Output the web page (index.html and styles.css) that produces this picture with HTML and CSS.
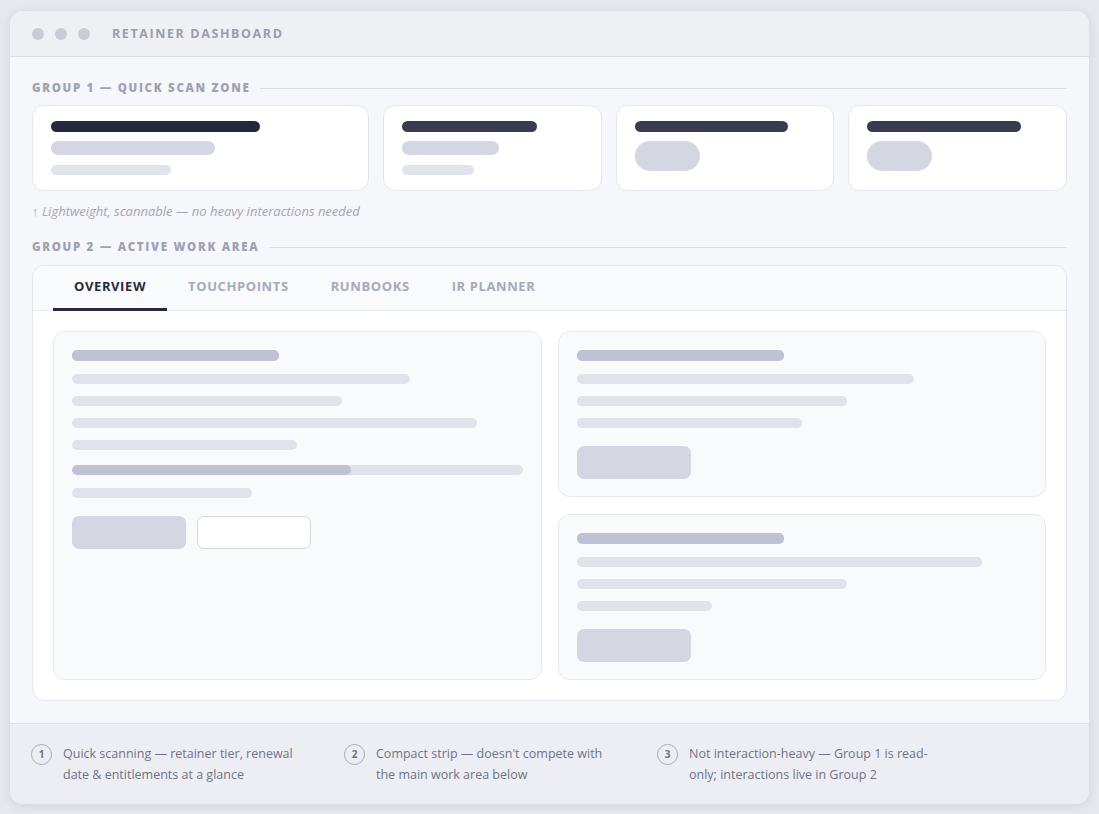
FILE: index.html
```html
<!DOCTYPE html>
<html>
    <head>
        <meta charset="utf-8">
        <link rel="stylesheet" href="styles.css">
    </head>

    <body>
        <div class="window">
            <div class="titlebar">
                <span class="dot"></span>
                <span class="dot"></span>
                <span class="dot"></span>
                <span class="title">Retainer Dashboard</span>
            </div>

            <div class="main">
                <div class="group-label">Group 1 — Quick Scan Zone</div>

                <div class="scan-strip">
                    <div class="scan-card">
                        <div class="bar bar-dark w-70"></div>
                        <div class="bar bar-mid w-55"></div>
                        <div class="bar bar-light w-40"></div>
                    </div>
                    <div class="scan-card">
                        <div class="bar bar-dark2 w-75"></div>
                        <div class="bar bar-mid w-54"></div>
                        <div class="bar bar-light w-40"></div>
                    </div>
                    <div class="scan-card">
                        <div class="bar bar-dark2 w-85"></div>
                        <div class="pill"></div>
                    </div>
                    <div class="scan-card">
                        <div class="bar bar-dark2 w-85"></div>
                        <div class="pill"></div>
                    </div>
                </div>

                <div class="hint">↑ Lightweight, scannable — no heavy interactions needed</div>

                <div class="group-label">Group 2 — Active Work Area</div>

                <div class="work-panel">
                    <div class="tabs">
                        <div class="tab active">Overview</div>
                        <div class="tab">Touchpoints</div>
                        <div class="tab">Runbooks</div>
                        <div class="tab">IR Planner</div>
                    </div>

                    <div class="tab-body">
                        <div class="block block-tall">
                            <div class="line line-head w-46"></div>
                            <div class="line w-75"></div>
                            <div class="line w-60"></div>
                            <div class="line w-90"></div>
                            <div class="line w-50"></div>
                            <div class="progress"><div class="progress-fill"></div></div>
                            <div class="line w-40"></div>
                            <div class="actions">
                                <div class="btn"></div>
                                <div class="btn btn-outline"></div>
                            </div>
                        </div>

                        <div class="side">
                            <div class="block">
                                <div class="line line-head w-46"></div>
                                <div class="line w-75"></div>
                                <div class="line w-60"></div>
                                <div class="line w-50"></div>
                                <div class="actions"><div class="btn"></div></div>
                            </div>
                            <div class="block">
                                <div class="line line-head w-46"></div>
                                <div class="line w-90"></div>
                                <div class="line w-60"></div>
                                <div class="line w-30"></div>
                                <div class="actions"><div class="btn"></div></div>
                            </div>
                        </div>
                    </div>
                </div>
            </div>

            <div class="notes">
                <div class="note">
                    <span class="num">1</span>
                    <p>Quick scanning — retainer tier, renewal date &amp; entitlements at a glance</p>
                </div>
                <div class="note">
                    <span class="num">2</span>
                    <p>Compact strip — doesn't compete with the main work area below</p>
                </div>
                <div class="note">
                    <span class="num">3</span>
                    <p>Not interaction-heavy — Group 1 is read-only; interactions live in Group 2</p>
                </div>
            </div>
        </div>
    </body>
</html>
```

FILE: styles.css
```css
* {
    box-sizing: border-box;
}

body {
    margin: 0;
    padding: 10px 9px 12px;
    background-color: #e7e8ed;
    font-family: "Open Sans", "Noto Sans", sans-serif;
}

.window {
    background-color: #f6f7fa;
    border: 1px solid #dcdee5;
    border-radius: 14px;
    overflow: hidden;
    box-shadow: 0 2px 10px rgba(40, 44, 70, 0.08);
}

/* title bar */
.titlebar {
    display: flex;
    align-items: center;
    height: 46px;
    padding: 0 22px;
    background-color: #eff0f4;
    border-bottom: 1px solid #dcdee6;
}

.dot {
    width: 12px;
    height: 12px;
    border-radius: 50%;
    background-color: #c9cbd5;
    margin-right: 11px;
}

.title {
    margin-left: 11px;
    font-size: 12.5px;
    font-weight: 700;
    letter-spacing: 1.6px;
    text-transform: uppercase;
    color: #9a9dae;
}

/* main area */
.main {
    padding: 23px 22px 22px;
}

.group-label {
    display: flex;
    align-items: center;
    gap: 10px;
    font-size: 11.5px;
    font-weight: 800;
    letter-spacing: 1.7px;
    text-transform: uppercase;
    color: #9ea2b4;
    line-height: 16px;
}

.group-label::after {
    content: "";
    flex: 1;
    height: 1px;
    background-color: #dcdee6;
}

.scan-strip {
    display: grid;
    grid-template-columns: 1.54fr 1fr 1fr 1fr;
    gap: 14px;
    margin-top: 9px;
}

.scan-card {
    height: 86px;
    padding: 15px 18px;
    background-color: #fff;
    border: 1px solid #e3e5ec;
    border-radius: 12px;
}

.bar {
    border-radius: 6px;
}

.bar-dark {
    height: 11px;
    background-color: #23283a;
}

.bar-dark2 {
    height: 11px;
    background-color: #393c50;
}

.bar-mid {
    height: 14px;
    margin-top: 9px;
    background-color: #d4d6e2;
    border-radius: 7px;
}

.bar-light {
    height: 10px;
    margin-top: 10px;
    background-color: #e2e4ec;
    border-radius: 5px;
}

.pill {
    width: 65px;
    height: 30px;
    margin-top: 9px;
    border-radius: 15px;
    background-color: #d4d6e2;
}

.hint {
    margin: 12px 0 20px;
    font-size: 13px;
    font-style: italic;
    line-height: 16px;
    color: #a3a6b6;
}

/* tabs panel */
.work-panel {
    margin-top: 10px;
    background-color: #fff;
    border: 1px solid #e3e5ec;
    border-radius: 12px;
    overflow: hidden;
}

.tabs {
    display: flex;
    padding: 0 20px;
    background-color: #f9fafc;
    border-bottom: 1px solid #e6e8ee;
}

.tab {
    padding: 11px 21px 0;
    height: 44px;
    font-size: 13px;
    font-weight: 700;
    letter-spacing: 0.6px;
    text-transform: uppercase;
    color: #a6a9ba;
    border-bottom: 3px solid transparent;
}

.tab.active {
    color: #262a3a;
    border-bottom-color: #262a3a;
    margin-bottom: -1px;
    height: 45px;
}

.tab-body {
    display: grid;
    grid-template-columns: 1fr 1fr;
    gap: 16px;
    padding: 20px;
}

.side {
    display: flex;
    flex-direction: column;
    gap: 17px;
}

.block {
    padding: 18px 18px 17px;
    background-color: #f9fafc;
    border: 1px solid #e6e8ee;
    border-radius: 12px;
}

.block-tall {
    height: 349px;
}

.line {
    height: 10px;
    margin-top: 12px;
    border-radius: 5px;
    background-color: #e1e3eb;
}

.line-head {
    height: 11px;
    margin-top: 0;
    margin-bottom: 13px;
    background-color: #bfc2d3;
}

.line-head + .line {
    margin-top: 0;
}

.progress {
    height: 10px;
    margin-top: 15px;
    border-radius: 5px;
    background-color: #e1e3eb;
    overflow: hidden;
}

.progress-fill {
    width: 62%;
    height: 100%;
    border-radius: 5px;
    background-color: #bfc2d3;
}

.progress + .line {
    margin-top: 13px;
}

.actions {
    display: flex;
    gap: 11px;
    margin-top: 18px;
}

.btn {
    width: 114px;
    height: 33px;
    border-radius: 7px;
    background-color: #d4d6e2;
}

.btn-outline {
    background-color: #fff;
    border: 1px solid #d4d6e2;
}

.w-30 { width: 30%; }
.w-40 { width: 40%; }
.w-46 { width: 46%; }
.w-50 { width: 50%; }
.w-54 { width: 54%; }
.w-55 { width: 55%; }
.w-60 { width: 60%; }
.w-70 { width: 70%; }
.w-75 { width: 75%; }
.w-85 { width: 85%; }
.w-90 { width: 90%; }

/* footnotes */
.notes {
    display: flex;
    gap: 33px;
    padding: 19px 21px 19px;
    background-color: #eceef3;
    border-top: 1px solid #dfe1e8;
}

.note {
    display: flex;
    gap: 11px;
    width: 280px;
}

.num {
    flex: none;
    width: 21px;
    height: 21px;
    margin-top: 1px;
    border: 1.5px solid #a9acbc;
    border-radius: 50%;
    font-size: 10px;
    font-weight: 700;
    line-height: 18px;
    text-align: center;
    color: #6f7386;
}

.note p {
    margin: 0;
    font-size: 12.5px;
    line-height: 21px;
    color: #6f7386;
}
```
